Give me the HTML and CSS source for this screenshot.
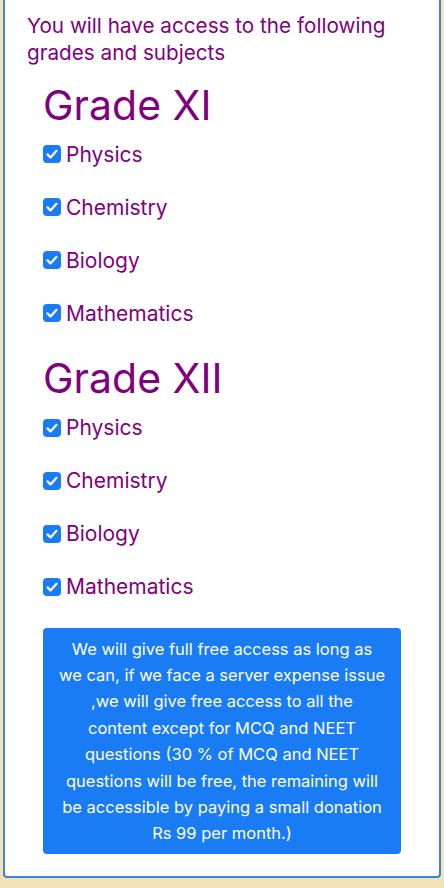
FILE: index.html
```html
<!DOCTYPE html>
<html>
  <head>
    <title>Access</title>
    <link rel="stylesheet" href="styles.css">
    <meta name="viewport" content="width=device-width, initial-scale=1">
  </head>
  <body>
    <div class="card">
      <p class="intro">You will have access to the following grades and subjects</p>

      <div class="grade">
        <h1>Grade XI</h1>
        <ul class="subjects">
          <li><svg class="tick" viewBox="0 0 18 18"><rect width="18" height="18" rx="4" fill="#1a7cf4"/><path d="M4.5 9.4l3 3 6-6.6" fill="none" stroke="#fff" stroke-width="2.2" stroke-linecap="round" stroke-linejoin="round"/></svg>Physics</li>
          <li><svg class="tick" viewBox="0 0 18 18"><rect width="18" height="18" rx="4" fill="#1a7cf4"/><path d="M4.5 9.4l3 3 6-6.6" fill="none" stroke="#fff" stroke-width="2.2" stroke-linecap="round" stroke-linejoin="round"/></svg>Chemistry</li>
          <li><svg class="tick" viewBox="0 0 18 18"><rect width="18" height="18" rx="4" fill="#1a7cf4"/><path d="M4.5 9.4l3 3 6-6.6" fill="none" stroke="#fff" stroke-width="2.2" stroke-linecap="round" stroke-linejoin="round"/></svg>Biology</li>
          <li><svg class="tick" viewBox="0 0 18 18"><rect width="18" height="18" rx="4" fill="#1a7cf4"/><path d="M4.5 9.4l3 3 6-6.6" fill="none" stroke="#fff" stroke-width="2.2" stroke-linecap="round" stroke-linejoin="round"/></svg>Mathematics</li>
        </ul>
      </div>

      <div class="grade">
        <h1>Grade XII</h1>
        <ul class="subjects">
          <li><svg class="tick" viewBox="0 0 18 18"><rect width="18" height="18" rx="4" fill="#1a7cf4"/><path d="M4.5 9.4l3 3 6-6.6" fill="none" stroke="#fff" stroke-width="2.2" stroke-linecap="round" stroke-linejoin="round"/></svg>Physics</li>
          <li><svg class="tick" viewBox="0 0 18 18"><rect width="18" height="18" rx="4" fill="#1a7cf4"/><path d="M4.5 9.4l3 3 6-6.6" fill="none" stroke="#fff" stroke-width="2.2" stroke-linecap="round" stroke-linejoin="round"/></svg>Chemistry</li>
          <li><svg class="tick" viewBox="0 0 18 18"><rect width="18" height="18" rx="4" fill="#1a7cf4"/><path d="M4.5 9.4l3 3 6-6.6" fill="none" stroke="#fff" stroke-width="2.2" stroke-linecap="round" stroke-linejoin="round"/></svg>Biology</li>
          <li><svg class="tick" viewBox="0 0 18 18"><rect width="18" height="18" rx="4" fill="#1a7cf4"/><path d="M4.5 9.4l3 3 6-6.6" fill="none" stroke="#fff" stroke-width="2.2" stroke-linecap="round" stroke-linejoin="round"/></svg>Mathematics</li>
        </ul>
      </div>

      <div class="notice">
        We will give full free access as long as<br>
        we can, if we face a server expense issue<br>
        ,we will give free access to all the<br>
        content except for MCQ and NEET<br>
        questions (30 % of MCQ and NEET<br>
        questions will be free, the remaining will<br>
        be accessible by paying a small donation<br>
        Rs 99 per month.)
      </div>
    </div>
  </body>
</html>
```

FILE: styles.css
```css
:root {
  --page: #f4e3b6;
  --border: #3d84d8;
  --purple: #800080;
  --blue: #1a7cf4;
}

* {
  box-sizing: border-box;
}

body {
  margin: 0;
  height: 888px;
  background: var(--page);
  font-family: Inter, "Noto Sans", sans-serif;
}

.card {
  margin: 0 3px 0 3px;
  padding: 12px 38px 22px 22px;
  background: #fff;
  border: 2px solid var(--border);
  border-top: none;
  border-radius: 0 0 4px 4px;
}

.intro {
  margin: 0;
  font-size: 20.7px;
  line-height: 27px;
  color: var(--purple);
}

.grade {
  padding-left: 16px;
}

.grade h1 {
  margin: 15.5px 0 0;
  font-size: 41px;
  font-weight: 400;
  line-height: 46px;
  color: var(--purple);
}

.subjects {
  list-style: none;
  margin: 0;
  padding: 0;
}

.subjects li {
  display: flex;
  align-items: center;
  gap: 5px;
  height: 53px;
  font-size: 21px;
  color: var(--purple);
}

.tick {
  width: 18px;
  height: 18px;
  flex: none;
}

.notice {
  margin: 14.5px 0 0 16px;
  padding: 8px 8px 7px;
  background: var(--blue);
  border-radius: 4px;
  color: #fff;
  text-align: center;
  font-size: 16.5px;
  line-height: 26.4px;
}
```
